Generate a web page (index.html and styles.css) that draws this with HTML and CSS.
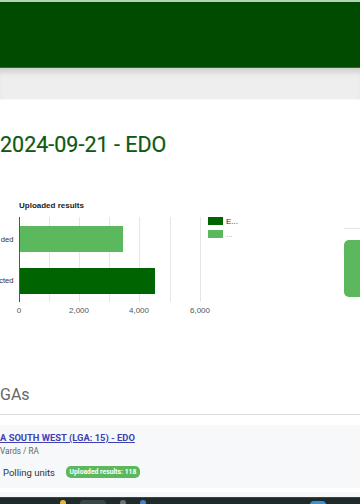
FILE: index.html
```html
<!DOCTYPE html>
<html lang="en">
<head>
  <meta charset="UTF-8">
  <title>Results - EDO</title>
  <meta name="viewport" content="width=device-width, initial-scale=1.0">
  <link rel="stylesheet" href="styles.css">
</head>
<body>

  <div class="topline"></div>
  <header class="navbar"></header>
  <div class="subbar"></div>

  <main class="content">
    <h2 class="page-title">2024-09-21 - EDO</h2>

    <!-- chart + summary box -->
    <div class="chart-row">
      <svg class="chart" width="344" height="130" viewBox="0 0 344 130">
        <text x="19" y="12" class="chart-title">Uploaded results</text>

        <g class="grid">
          <line x1="49.5" y1="21" x2="49.5" y2="106"></line>
          <line x1="79.5" y1="21" x2="79.5" y2="106"></line>
          <line x1="109.5" y1="21" x2="109.5" y2="106"></line>
          <line x1="139.5" y1="21" x2="139.5" y2="106"></line>
          <line x1="170.5" y1="21" x2="170.5" y2="106"></line>
          <line x1="200.5" y1="21" x2="200.5" y2="106"></line>
        </g>

        <rect x="19" y="30" width="104" height="26" fill="#5cb85c"></rect>
        <rect x="19" y="72" width="136" height="26" fill="#006400"></rect>
        <line x1="19.5" y1="21" x2="19.5" y2="106" class="axis"></line>

        <text x="13.5" y="46" class="bar-label" text-anchor="end">ded</text>
        <text x="13.5" y="87" class="bar-label" text-anchor="end">cted</text>

        <text x="19" y="117" class="tick" text-anchor="middle">0</text>
        <text x="79" y="117" class="tick" text-anchor="middle">2,000</text>
        <text x="139" y="117" class="tick" text-anchor="middle">4,000</text>
        <text x="200" y="117" class="tick" text-anchor="middle">6,000</text>

        <rect x="208" y="21" width="15" height="8" fill="#006400"></rect>
        <text x="226" y="28" class="legend">E...</text>
        <rect x="208" y="34" width="15" height="8" fill="#5cb85c"></rect>
        <text x="226" y="41" class="legend muted">...</text>
      </svg>

      <div class="summary">
        <div class="summary-box"></div>
      </div>
    </div>

    <div class="section-title">GAs</div>

    <div class="lga-card">
      <a href="#" class="lga-link">A SOUTH WEST (LGA: 15) - EDO</a>
      <div class="lga-sub">Vards / RA</div>
      <div class="lga-stats">
        <span class="pu-count">Polling units</span>
        <span class="badge">Uploaded results: 118</span>
      </div>
    </div>

    <div class="lga-card next"></div>
  </main>

  <!-- taskbar at the bottom of the screen -->
  <div class="taskbar">
    <span class="tb-dot yellow"></span>
    <span class="tb-pill"></span>
    <span class="tb-dot grey"></span>
    <span class="tb-dot blue"></span>
    <span class="tb-wide"></span>
  </div>

</body>
</html>
```

FILE: styles.css
```css
body {
  font-family: Roboto, "Liberation Sans", sans-serif;
  margin: 0;
  padding: 0;
  background-color: #ffffff;
  overflow: hidden;
  height: 504px;
}

.topline {
  height: 2px;
  background-color: #b4d2b4;
}

.navbar {
  height: 65px;
  background-color: #004b00;
  border-bottom: 1px solid #2f6c2f;
}

.subbar {
  height: 32px;
  background-color: #eeeeee;
  box-shadow: inset 0 7px 7px -4px rgba(0, 0, 0, 0.16);
  border-bottom: 1px solid #f6f6f6;
  box-sizing: border-box;
}

.page-title {
  margin: 32px 0 0;
  font-size: 21.5px;
  line-height: 26px;
  font-weight: 400;
  color: #0f5a0f;
  -webkit-text-stroke: 0.2px #0f5a0f;
}

.chart-row {
  display: flex;
  margin-top: 38px;
}

.chart {
  flex: none;
  display: block;
  font-family: "Liberation Sans", Arial, sans-serif;
}

.chart-title {
  font-size: 8px;
  font-weight: bold;
  fill: #222222;
}

.grid line {
  stroke: #e6e6e6;
  stroke-width: 1;
}

.axis {
  stroke: #555555;
  stroke-width: 1;
}

.bar-label {
  font-size: 7.6px;
  fill: #333333;
}

.tick {
  font-size: 8px;
  fill: #555555;
}

.legend {
  font-size: 8px;
  fill: #333333;
}

.legend.muted {
  fill: #999999;
}

.summary {
  flex: none;
  width: 40px;
  margin-top: 32px;
  border-top: 1px solid #e6e6e6;
  padding-top: 11px;
}

.summary-box {
  height: 57px;
  background-color: #5cb85c;
  border-radius: 5px;
}

.section-title {
  margin-top: 59px;
  font-size: 16px;
  line-height: 20px;
  color: #666666;
  padding-bottom: 9px;
  border-bottom: 1px solid #dddddd;
}

.lga-card {
  margin-top: 10px;
  background-color: #f7f8fa;
  padding: 6px 0 10px;
}

.lga-card.next {
  margin-top: 4px;
  height: 20px;
  padding: 0;
}

.lga-link {
  display: block;
  font-size: 9.4px;
  line-height: 14px;
  font-weight: bold;
  color: #4040b4;
  text-decoration: underline;
}

.lga-sub {
  font-size: 8.2px;
  line-height: 12px;
  color: #666666;
}

.lga-stats {
  display: flex;
  align-items: center;
  margin-top: 9px;
  gap: 11px;
}

.pu-count {
  font-size: 9.5px;
  color: #333333;
  padding-left: 3px;
}

.badge {
  background-color: #5cb85c;
  color: white;
  font-size: 6.8px;
  font-weight: bold;
  line-height: 12px;
  padding: 0 3.5px;
  border-radius: 5px;
}

.taskbar {
  position: fixed;
  left: 0;
  bottom: 0;
  width: 100%;
  height: 7px;
  background-color: #1f2a2b;
  border-top: 1px solid #3a4444;
  display: flex;
  align-items: flex-start;
  gap: 14px;
  padding-left: 60px;
  box-sizing: border-box;
}

.tb-dot {
  width: 6px;
  height: 6px;
  border-radius: 50%;
  margin-top: 2px;
}

.tb-dot.yellow { background-color: #e8b730; }
.tb-dot.grey { background-color: #6b7373; }
.tb-dot.blue { background-color: #4a7fc0; }

.tb-pill {
  width: 26px;
  height: 6px;
  margin-top: 2px;
  border-radius: 4px 4px 0 0;
  background-color: #3b4646;
}

.tb-wide {
  width: 16px;
  height: 5px;
  margin-top: 3px;
  margin-left: 150px;
  border-radius: 4px 4px 0 0;
  background-color: #3d8fd6;
}
```
